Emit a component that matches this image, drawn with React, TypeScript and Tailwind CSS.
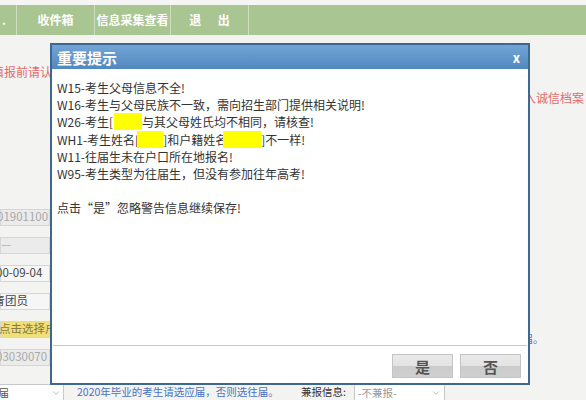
import { ChevronDown } from "lucide-react";

const navItems = [
  { label: ".", w: "w-[17px] justify-start pl-[2px]" },
  { label: "收件箱", w: "w-[78px] justify-center" },
  { label: "信息采集查看", w: "w-[76px] justify-center" },
  { label: "退\u00a0\u00a0\u00a0\u00a0\u00a0\u00a0出", w: "w-[78px] justify-center" },
];

const fields = [
  { text: "01901100", cls: "bg-[#ebebeb] text-[#a8a8a8]", off: "-ml-[4px]" },
  { text: "—", cls: "bg-[#ebebeb] text-[#b0b0b0]", off: "ml-0" },
  { text: "00-09-04", cls: "bg-[#f6f6f6] text-[#444]", off: "-ml-[5px]" },
  { text: "共青团员", cls: "bg-[#f6f6f6] text-[#444]", off: "-ml-[19px]" },
  { text: "点击选择户口", cls: "bg-[#f1df78] text-[#8a7a44]", off: "-ml-[2px]" },
  { text: "03030070", cls: "bg-[#ebebeb] text-[#a8a8a8]", off: "-ml-[5px]" },
];

function Redact({ w }: { w: string }) {
  return <span className={`inline-block h-[17px] align-top bg-[#ffff00] ${w}`} />;
}

export default function App() {
  return (
    <div className="relative w-[586px] h-[400px] overflow-hidden bg-[#f3f3f1] font-['Noto_Sans_CJK_SC',sans-serif]">
      {/* top nav */}
      <div className="pt-[5px] bg-[#f5f5f3]">
        <div className="h-[30px] bg-[#a9c692] flex">
          {navItems.map((n) => (
            <div
              key={n.label}
              className={`${n.w} h-full border-r border-[#cfe0c2] flex items-center text-white text-[12px] font-bold`}
            >
              {n.label}
            </div>
          ))}
        </div>
      </div>

      {/* page content behind the dialog */}
      <div className="flex h-[349px]">
        <div className="w-[50px] shrink-0 overflow-hidden">
          <div className="mt-[30px] -ml-[8px] whitespace-nowrap text-[12px] leading-[14px] text-[#e36b6b]">填报前请认真</div>
          <div className="mt-[124px]">
            {fields.map((f) => (
              <div key={f.text} className="h-[28px] flex items-center">
                <div className={`h-[17px] w-[80px] border border-[#d6d6d6] flex items-center whitespace-nowrap text-[11.5px] ${f.cls}`}>
                  <span className={f.off}>{f.text}</span>
                </div>
              </div>
            ))}
          </div>
        </div>
        <div className="flex-1" />
        <div className="w-[62px] shrink-0 overflow-hidden">
          <div className="mt-[56px] whitespace-nowrap text-[12px] leading-[14px] text-[#e36b6b]">入诚信档案</div>
          <div className="mt-[227px] -ml-[12px] whitespace-nowrap text-[10.5px] leading-[14px] text-[#4a72c4]">往届。</div>
        </div>
      </div>

      {/* bottom row */}
      <div className="flex items-center h-[16px] text-[10.5px]">
        <div className="w-[64px] h-[16px] border-r border-t border-[#c8c8c8] bg-white flex items-center justify-between pr-[2px] overflow-hidden">
          <span className="-ml-[12px] text-[#555] whitespace-nowrap">往届</span>
          <ChevronDown className="w-[10px] h-[10px] text-[#999]" strokeWidth={1.5} />
        </div>
        <span className="ml-[13px] w-[224px] text-[#4a72c4] whitespace-nowrap">2020年毕业的考生请选应届，否则选往届。</span>
        <span className="text-[#333] whitespace-nowrap">兼报信息:</span>
        <div className="ml-[8px] w-[91px] h-[16px] border border-b-0 border-[#c8c8c8] bg-white flex items-center justify-between px-[3px]">
          <span className="text-[#999]">-不兼报-</span>
          <ChevronDown className="w-[10px] h-[10px] text-[#999]" strokeWidth={1.5} />
        </div>
      </div>

      {/* modal */}
      <div className="absolute left-[50px] top-[43px] w-[480px] h-[342px] border-2 border-[#3e6890] bg-white flex flex-col">
        <div className="h-[24px] shrink-0 bg-[linear-gradient(#72a5d6,#5288be)] flex items-center justify-between pl-[5px] pr-[8px]">
          <span className="text-white text-[15px] font-bold leading-none">重要提示</span>
          <span className="text-white text-[13px] font-bold leading-none">x</span>
        </div>
        <div className="flex-1 pt-[10px] pl-[5px] text-[12px] leading-[17.2px] text-[#333] whitespace-nowrap">
          <div>W15-考生父母信息不全!</div>
          <div>W16-考生与父母民族不一致，需向招生部门提供相关说明!</div>
          <div>
            W26-考生[<Redact w="w-[28px] ml-[1px]" />与其父母姓氏均不相同，请核查!
          </div>
          <div>
            WH1-考生姓名[<Redact w="w-[26px] -ml-[2px]" />]和户籍姓名<Redact w="w-[38px] -ml-[4px]" />]不一样!
          </div>
          <div>W11-往届生未在户口所在地报名!</div>
          <div>W95-考生类型为往届生，但没有参加往年高考!</div>
          <div>&nbsp;</div>
          <div>点击“是”忽略警告信息继续保存!</div>
        </div>
        <div className="h-[38px] shrink-0 mx-[1px] border-t border-[#c8c8c8] flex justify-end gap-[7px] pt-[8px] pr-[6px]">
          {["是", "否"].map((b) => (
            <button
              key={b}
              className="w-[61px] h-[24px] border border-[#c4c4c4] bg-[linear-gradient(#e9e9e9_0%,#e3e3e3_50%,#cbcbcb_50%,#d0d0d0_100%)] text-[15px] font-bold text-[#555] leading-none"
            >
              {b}
            </button>
          ))}
        </div>
      </div>
    </div>
  );
}
